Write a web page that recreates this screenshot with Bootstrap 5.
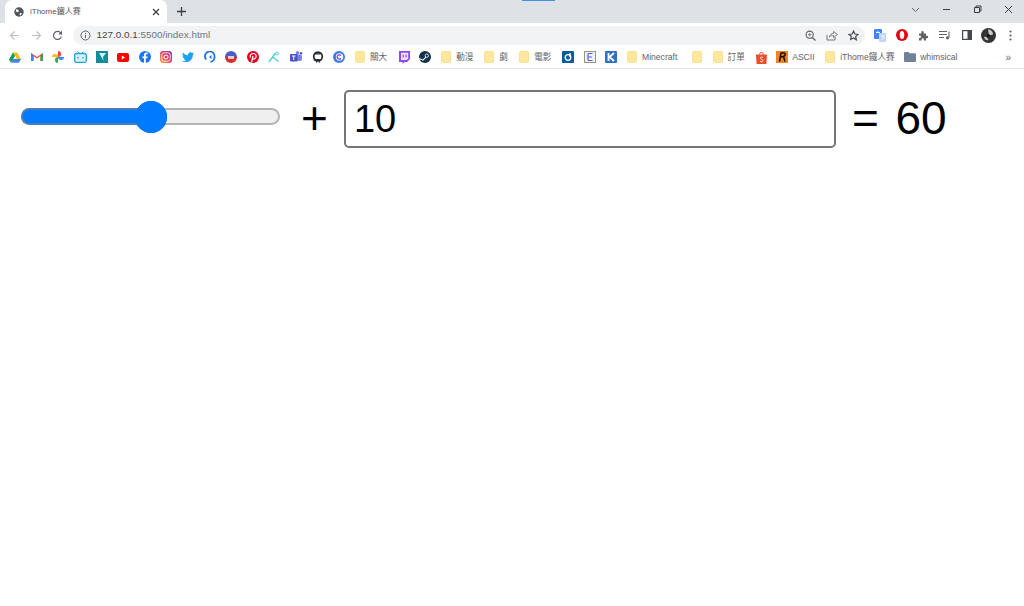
<!DOCTYPE html>
<html lang="en">
<head>
    <meta charset="UTF-8">
    <meta name="viewport" content="width=device-width, initial-scale=1.0">
    <title>iThome鐵人賽</title>
    <link href="https://cdn.jsdelivr.net/npm/bootstrap@5.3.3/dist/css/bootstrap.min.css" rel="stylesheet">
    <style>
        body { background: #fff; font-family: "Liberation Sans", "Noto Sans CJK TC", sans-serif; overflow: hidden; }
        /* browser frame */
        .tab-strip { height: 23px; background: #dee1e6; position: relative; }
        .load-line { position: absolute; left: 522px; top: 0; width: 33px; height: 1px; background: #3f92e4; }
        .page-tab { width: 162px; margin-left: 5px; height: 23px; background: #fff; border-radius: 7px 7px 0 0; padding: 0 7px 0 9px; font-size: 8px; color: #55585c; }
        .tab-title { margin-left: 6px; }
        .new-tab { margin-left: 9px; margin-bottom: 6px; }
        .win-btns { margin-left: auto; gap: 0; }
        .win-btn { width: 31px; height: 19px; }
        .tool-row { height: 23px; padding: 1px 0 0 4px; }
        .nav-ico { width: 21.5px; }
        .omni { width: 792px; height: 19px; margin-left: 4px; background: #f1f3f4; border-radius: 10px; padding: 0 6px 0 7px; font-size: 9.9px; color: #70757a; }
        .omni-url { margin-left: 6px; }
        .omni-dark { color: #45484c; }
        .omni-gap { margin-left: 10px; }
        .ext-row { margin-left: 1px; }
        .ext-ico { width: 21.7px; }
        .bookmarks { height: 23px; padding-left: 4.5px; border-bottom: 1px solid #e3e5e8; font-size: 8.6px; color: #5f6368; white-space: nowrap; }
        .bm { width: 21.6px; }
        .bm-label { margin-left: 4px; }
        .bm-w43 { width: 43px; }
        .bm-w35 { width: 35px; }
        .bm-w64 { width: 64px; }
        .bm-w48 { width: 48px; }
        .bm-w80 { width: 80px; }
        .bm-w62 { width: 62px; }
        .bm-more { margin-left: auto; margin-right: 13px; color: #5f6368; font-size: 10px; }
        /* exercise page */
        .calc-row { padding: 21px 0 0 21px; }
        .slider { -webkit-appearance: none; appearance: none; width: 259px; height: 17px; margin: 0; background: none; border-radius: 9px; }
        .slider::-webkit-slider-runnable-track { height: 17px; border-radius: 9px; border: 2px solid #b4b4b4; background: #efefef; }
        .slider::-webkit-slider-thumb { -webkit-appearance: none; appearance: none; width: 32px; height: 32px; margin-top: -9.5px; border-radius: 50%; background: #007bff; }
        .slider-box { position: relative; width: 259px; height: 17px; margin-bottom: 5px; }
        .slider-fill { position: absolute; left: 0; top: 0; height: 17px; background: #007bff; border: 2px solid #4a7db8; border-right: 0; border-radius: 9px 0 0 9px; pointer-events: none; }
        .slider-knob { position: absolute; left: 114px; top: -7.5px; width: 32px; height: 32px; border-radius: 50%; background: #007bff; pointer-events: none; }
        .calc-text { font-size: 46px; line-height: 58px; color: #000; }
        .plus-sign { margin-left: 21px; margin-top: -2px; }
        .num-field.form-control { width: 492px; height: 58px; margin-left: 16px; padding: 0 8px; font-family: inherit; font-size: 38px; color: #000; border: 2px solid #767676; border-radius: 5px; box-shadow: none; }
        .equal-sign { margin-left: 16px; margin-top: -2px; word-spacing: 4px; }
    </style>
</head>
<body>
<svg width="0" height="0" class="d-block position-absolute">
    <defs>
        <symbol id="folder-y" viewBox="0 0 12 14"><path d="M1.500 2.500a1 1 0 0 1 1-1h7a1 1 0 0 1 1 1v9a1 1 0 0 1-1 1h-7a1 1 0 0 1-1-1z" fill="#fee79f" stroke="#f8dc80" stroke-width=".8"/></symbol>
    </defs>
</svg>

<!-- Tabs -->
<div class="tab-strip d-flex align-items-end">
    <div class="load-line"></div>
    <div class="page-tab d-flex align-items-center">
        <svg width="10" height="10" viewBox="0 0 10 10"><circle cx="5" cy="5" r="4.7" fill="#50565c"/><path d="M2 2.200l2 .4 1 1.600-1.200 1-1.700-.6zM6 6l2 .2-1.400 2.400L5.500 8z" fill="#fff"/></svg>
        <span class="tab-title">iThome鐵人賽</span>
        <svg class="ms-auto" width="8" height="8" viewBox="0 0 8 8"><path d="M1 1l6 6M7 1L1 7" stroke="#3c4043" stroke-width="1.300"/></svg>
    </div>
    <svg class="new-tab" width="11" height="11" viewBox="0 0 11 11"><path d="M5.500 1v9M1 5.500h9" stroke="#3c4043" stroke-width="1.300"/></svg>
    <div class="win-btns d-flex align-items-center mb-1">
        <div class="win-btn d-flex align-items-center justify-content-center"><svg width="9" height="6" viewBox="0 0 9 6"><path d="M1 1l3.500 3.500L8 1" fill="none" stroke="#5f6368"/></svg></div>
        <div class="win-btn d-flex align-items-center justify-content-center"><svg width="9" height="9" viewBox="0 0 9 9"><path d="M1 4.500h7" stroke="#3c4043"/></svg></div>
        <div class="win-btn d-flex align-items-center justify-content-center"><svg width="9" height="9" viewBox="0 0 9 9"><path d="M1.500 2.500h5v5h-5zM3 2.500V1h5v5H6.500" fill="none" stroke="#3c4043"/></svg></div>
        <div class="win-btn d-flex align-items-center justify-content-center"><svg width="9" height="9" viewBox="0 0 9 9"><path d="M1 1l7 7M8 1L1 8" stroke="#3c4043"/></svg></div>
    </div>
</div>

<!-- Address bar -->
<div class="tool-row d-flex align-items-center">
    <div class="nav-ico d-flex justify-content-center"><svg width="11" height="11" viewBox="0 0 11 11"><path d="M10 5.500H1.500M5.500 1.500l-4 4 4 4" fill="none" stroke="#bdc1c6" stroke-width="1.200"/></svg></div>
    <div class="nav-ico d-flex justify-content-center"><svg width="11" height="11" viewBox="0 0 11 11"><path d="M1 5.500h8.500M5.500 1.500l4 4-4 4" fill="none" stroke="#bdc1c6" stroke-width="1.200"/></svg></div>
    <div class="nav-ico d-flex justify-content-center"><svg width="11" height="11" viewBox="0 0 11 11"><path d="M9.300 6.600A4 4 0 1 1 8.400 2.700L9.600 4" fill="none" stroke="#5f6368" stroke-width="1.200"/><path d="M10 .8v3.600H6.400z" fill="#5f6368"/></svg></div>
    <div class="omni d-flex align-items-center">
        <svg width="11" height="11" viewBox="0 0 11 11"><circle cx="5.500" cy="5.500" r="4.500" fill="none" stroke="#5f6368"/><path d="M5.500 5v3M5.500 3v1.200" stroke="#5f6368"/></svg>
        <span class="omni-url"><span class="omni-dark">127.0.0.1</span>:5500/index.html</span>
        <svg class="ms-auto" width="11" height="11" viewBox="0 0 11 11"><circle cx="4.700" cy="4.700" r="3.600" fill="none" stroke="#5f6368" stroke-width="1.100"/><path d="M7.400 7.400l3 3" stroke="#5f6368" stroke-width="1.400"/><path d="M3 4.700h3.400M4.700 3v3.400" stroke="#5f6368" stroke-width=".8"/></svg>
        <svg class="omni-gap" width="12" height="11" viewBox="0 0 12 11"><path d="M1 5v5h8V7" fill="none" stroke="#70757a"/><path d="M3.500 7c.3-2.500 2-3.500 4-3.500V1.500l4 3-4 3V5.500c-1.500 0-3 .3-4 1.500z" fill="none" stroke="#70757a" stroke-width=".9"/></svg>
        <svg class="omni-gap" width="11" height="11" viewBox="0 0 12 12"><path d="M6 1.200l1.500 3.200 3.500.4-2.600 2.400.7 3.500L6 8.600l-3.100 1.700.7-3.500L1 4.800l3.500-.4z" fill="none" stroke="#45484c" stroke-width="1.300"/></svg>
    </div>
    <div class="ext-row d-flex align-items-center">
        <div class="ext-ico d-flex justify-content-center ms-1"><svg width="12" height="13" viewBox="0 0 12 13"><rect x="0" y="0" width="8" height="10" rx="1" fill="#4285f4"/><rect x="5" y="4" width="7" height="9" rx="1" fill="#c3d4f2"/><path d="M2 3.500h4M4 2v1.500M7 7h3.500l-2 3.500" stroke="#fff" stroke-width=".9" fill="none"/></svg></div>
        <div class="ext-ico d-flex justify-content-center"><svg width="12" height="12" viewBox="0 0 12 12"><circle cx="6" cy="6" r="6" fill="#e60012"/><ellipse cx="6" cy="6" rx="2.300" ry="4" fill="#fff"/></svg></div>
        <div class="ext-ico d-flex justify-content-center"><svg width="11" height="11" viewBox="0 0 11 11"><path d="M1 3.500h2.300V2.300a1.200 1.200 0 0 1 2.400 0v1.200H8v2.300h1a1.200 1.200 0 0 1 0 2.400H8V10.500H5.800V9.300a1.100 1.100 0 0 0-2.200 0v1.200H1V8h.8a1.200 1.200 0 0 0 0-2.400H1z" fill="#5f6368"/></svg></div>
        <div class="ext-ico d-flex justify-content-center"><svg width="12" height="10" viewBox="0 0 12 10"><path d="M0 1.500h8M0 4.500h8M0 7.500h5" stroke="#5f6368" stroke-width="1.100"/><path d="M10 1.500v6" stroke="#5f6368" stroke-width="1.100"/><circle cx="8.500" cy="7.800" r="1.600" fill="#5f6368"/></svg></div>
        <div class="ext-ico d-flex justify-content-center"><svg width="10" height="10" viewBox="0 0 10 10"><rect x=".6" y=".6" width="8.800" height="8.800" fill="#fff" stroke="#45484c" stroke-width="1.200"/><rect x="5.500" y="1" width="4" height="8" fill="#45484c"/></svg></div>
        <div class="ext-ico d-flex justify-content-center"><svg width="15" height="15" viewBox="0 0 15 15"><circle cx="7.500" cy="7.500" r="7.500" fill="#333"/><path d="M7 1.500c3 0 5 2 5 5l-4 1zM3 9c2-.5 3 0 4.500 3-2 .8-4-.5-4.500-3z" fill="#c9c9c9"/><circle cx="7.500" cy="7.500" r="1.500" fill="#111"/></svg></div>
        <div class="ext-ico d-flex justify-content-center"><svg width="3" height="11" viewBox="0 0 3 11"><circle cx="1.500" cy="1.500" r="1.100" fill="#5f6368"/><circle cx="1.500" cy="5.500" r="1.100" fill="#5f6368"/><circle cx="1.500" cy="9.500" r="1.100" fill="#5f6368"/></svg></div>
    </div>
</div>

<!-- Bookmarks -->
<div class="bookmarks d-flex align-items-center">
    <div class="bm d-flex justify-content-center"><svg width="12" height="11" viewBox="0 0 12 11"><path d="M4 .5h4l4 6.500H8z" fill="#fbbc04"/><path d="M4 .5L0 7.500l2 3.200 4-7z" fill="#0f9d58"/><path d="M2 10.700h8l2-3.700H4z" fill="#4285f4"/></svg></div>
    <div class="bm d-flex justify-content-center"><svg width="12" height="10" viewBox="0 0 12 10"><path d="M0 1v8h2.500V4L6 6.500 9.500 4v5H12V1L6 5z" fill="#ea4335"/><path d="M0 1v8h2.500V4z" fill="#4285f4"/><path d="M9.500 4v5H12V1z" fill="#34a853"/></svg></div>
    <div class="bm d-flex justify-content-center"><svg width="12" height="12" viewBox="0 0 12 12"><path d="M6 6V0a3 3 0 0 1 0 6z" fill="#ea4335"/><path d="M6 6h6a3 3 0 0 1-6 0z" fill="#4285f4"/><path d="M6 6v6a3 3 0 0 1 0-6z" fill="#34a853"/><path d="M6 6H0a3 3 0 0 1 6 0z" fill="#fbbc04"/></svg></div>
    <div class="bm d-flex justify-content-center"><svg width="13" height="12" viewBox="0 0 13 12"><rect x=".7" y="2.500" width="11.600" height="8.800" rx="1.500" fill="#d7f1fb" stroke="#1fa5d8" stroke-width="1.300"/><path d="M3.500.5l2 2M9.500.5l-2 2" stroke="#1fa5d8"/><path d="M4 6v1.500M9 6v1.500" stroke="#1fa5d8" stroke-width="1.300"/></svg></div>
    <div class="bm d-flex justify-content-center"><svg width="12" height="12" viewBox="0 0 12 12"><rect width="12" height="12" fill="#0f8d99"/><path d="M3 2h7L7 6l.5 4L6 7z" fill="#d9f1f2"/></svg></div>
    <div class="bm d-flex justify-content-center"><svg width="12" height="9" viewBox="0 0 12 9"><rect width="12" height="9" rx="2" fill="#f00"/><path d="M4.800 2.500L8 4.500 4.800 6.500z" fill="#fff"/></svg></div>
    <div class="bm d-flex justify-content-center"><svg width="12" height="12" viewBox="0 0 12 12"><circle cx="6" cy="6" r="6" fill="#1877f2"/><path d="M6.800 12V7.200h1.500l.3-1.800H6.800V4.300c0-.6.3-1 1-1h.9V1.700C7 1.400 5 1.700 5 4v1.400H3.500v1.800H5V12z" fill="#fff"/></svg></div>
    <div class="bm d-flex justify-content-center"><svg width="12" height="12" viewBox="0 0 12 12"><defs><linearGradient id="ig" x1="0" y1="1" x2="1" y2="0"><stop offset="0" stop-color="#fdb04b"/><stop offset=".5" stop-color="#e4405f"/><stop offset="1" stop-color="#8a3ab9"/></linearGradient></defs><rect width="12" height="12" rx="3" fill="url(#ig)"/><rect x="1.800" y="1.800" width="8.400" height="8.400" rx="2.300" fill="none" stroke="#fff" stroke-width=".8"/><circle cx="6" cy="6" r="2" fill="none" stroke="#fff"/></svg></div>
    <div class="bm d-flex justify-content-center"><svg width="12" height="10" viewBox="0 0 12 10"><path d="M12 1.200l-1.300.4.900-1.200-1.400.6A2.500 2.500 0 0 0 6 3.200C4 3.200 2 2 .9.500.1 2 .6 3.500 1.800 4.300L.7 4c0 1.300.9 2.300 2 2.600h-1c.3 1 1.200 1.700 2.300 1.700C3 9.100 1.600 9.500 0 9.300 5 12 11 9 10.800 3c.5-.4.900-.9 1.200-1.800z" fill="#1da1f2"/></svg></div>
    <div class="bm d-flex justify-content-center"><svg width="12" height="12" viewBox="0 0 12 12"><path d="M2.200 8.500A4.800 4.800 0 1 1 10.500 6" fill="none" stroke="#1a73e8" stroke-width="1.800"/><path d="M10.500 6a4.500 4.500 0 0 1-4 4.800" fill="none" stroke="#1a73e8" stroke-width="1.800"/><path d="M7.500 4L5 6l2.500 2z" fill="#1a73e8"/></svg></div>
    <div class="bm d-flex justify-content-center"><svg width="12" height="12" viewBox="0 0 12 12"><path d="M0 6a6 6 0 0 1 12 0z" fill="#4a5fc4"/><path d="M0 6h12a6 6 0 0 1-12 0z" fill="#d92b2b"/><rect x="3" y="5" width="6" height="3" fill="#f7c9c9"/></svg></div>
    <div class="bm d-flex justify-content-center"><svg width="12" height="12" viewBox="0 0 12 12"><circle cx="6" cy="6" r="6" fill="#e60023"/><path d="M4.500 11.500L6 5M3.500 6.500C2.500 4 4.500 2.500 6.300 2.500 8.500 2.500 9.500 4.300 9 6c-.5 1.800-2.300 2.600-3.500 1.500" fill="none" stroke="#fff" stroke-width="1.200"/></svg></div>
    <div class="bm d-flex justify-content-center"><svg width="12" height="12" viewBox="0 0 12 12"><path d="M1 11l6.500-9M4 5.500l6.500 5" fill="none" stroke="#53d3cb" stroke-width="1.500"/><circle cx="9" cy="2.500" r="1.400" fill="none" stroke="#53d3cb"/></svg></div>
    <div class="bm d-flex justify-content-center"><svg width="13" height="12" viewBox="0 0 13 12"><rect x="5" y="3.500" width="7" height="6.500" rx="2" fill="#7b83eb"/><circle cx="7.500" cy="1.800" r="1.700" fill="#7b83eb"/><circle cx="11" cy="2.200" r="1.300" fill="#5059c9"/><rect x="0" y="3" width="7.500" height="7.500" rx="1" fill="#4b53bc"/><path d="M2 5h3.500M3.750 5v4" stroke="#fff"/></svg></div>
    <div class="bm d-flex justify-content-center"><svg width="12" height="12" viewBox="0 0 12 12"><circle cx="6" cy="5.500" r="4.300" fill="none" stroke="#24292f" stroke-width="1.700"/><path d="M3.600 1.200l1.400 1h2l1.400-1 .5 2.300H3.100zM4.200 8h3.600v3.800H6.900V9.500H5.100v2.300H4.200zM1 8.500c.9-.2 1.400.9 3 .9v.9c-1.900 0-2.300-1.300-3-1.800z" fill="#24292f"/></svg></div>
    <div class="bm d-flex justify-content-center"><svg width="12" height="12" viewBox="0 0 12 12"><circle cx="6" cy="6" r="6" fill="#3b7de0"/><circle cx="6.500" cy="6" r="3.700" fill="#f0f4ff"/><path d="M8 4.500a2.200 2.200 0 1 0 0 3" fill="none" stroke="#7a3fd0" stroke-width="1.200"/></svg></div>
    <div class="bm-w43 d-flex align-items-center ps-1"><svg width="12" height="14"><use href="#folder-y"/></svg><span class="bm-label">關大</span></div>
    <div class="bm d-flex justify-content-center"><svg width="12" height="13" viewBox="0 0 12 13"><path d="M1 0h11v8l-3 3H6.500L4.500 13v-2H1z" fill="#9146ff"/><path d="M3 1.800h7.200v5.500L8.500 9H3z" fill="#f1e9ff"/><path d="M5.200 3.500v3M8 3.500v3" stroke="#9146ff" stroke-width="1.200"/></svg></div>
    <div class="bm d-flex justify-content-center"><svg width="12" height="12" viewBox="0 0 12 12"><circle cx="6" cy="6" r="6" fill="#14304f"/><circle cx="7.800" cy="4.700" r="1.700" fill="none" stroke="#fff" stroke-width=".8"/><path d="M0 7.500l4 1.700 3-3" stroke="#fff" stroke-width="1.100" fill="none"/></svg></div>
    <div class="bm-w43 d-flex align-items-center ps-1"><svg width="12" height="14"><use href="#folder-y"/></svg><span class="bm-label">動漫</span></div>
    <div class="bm-w35 d-flex align-items-center ps-1"><svg width="12" height="14"><use href="#folder-y"/></svg><span class="bm-label">劇</span></div>
    <div class="bm-w43 d-flex align-items-center ps-1"><svg width="12" height="14"><use href="#folder-y"/></svg><span class="bm-label">電影</span></div>
    <div class="bm d-flex justify-content-center"><svg width="12" height="12" viewBox="0 0 12 12"><rect width="12" height="12" rx="1" fill="#0a5c96"/><circle cx="6" cy="6.500" r="2.800" fill="none" stroke="#fff" stroke-width="1.300"/><path d="M8 2v4" stroke="#fff" stroke-width="1.300"/></svg></div>
    <div class="bm d-flex justify-content-center"><svg width="12" height="12" viewBox="0 0 12 12"><rect x=".5" y=".5" width="11" height="11" fill="#eef0fa" stroke="#8f9a7d"/><path d="M4 2.500h4.500M4 6h4M4 9.500h4.500M4 2.500v7" stroke="#5a61c8" stroke-width="1.200" fill="none"/></svg></div>
    <div class="bm d-flex justify-content-center"><svg width="12" height="12" viewBox="0 0 12 12"><rect width="12" height="12" rx="1" fill="#2f72c4"/><path d="M3.500 2v8M9 2L4.500 6 9 10" fill="none" stroke="#fff" stroke-width="1.800"/></svg></div>
    <div class="bm-w64 d-flex align-items-center ps-1"><svg width="12" height="14"><use href="#folder-y"/></svg><span class="bm-label">Minecraft</span></div>
    <div class="bm d-flex justify-content-center"><svg width="12" height="14"><use href="#folder-y"/></svg></div>
    <div class="bm-w43 d-flex align-items-center ps-1"><svg width="12" height="14"><use href="#folder-y"/></svg><span class="bm-label">訂單</span></div>
    <div class="bm d-flex justify-content-center"><svg width="11" height="13" viewBox="0 0 11 13"><path d="M0 3.500h11l-.6 9.500H.6z" fill="#ee4d2d"/><path d="M3.500 3.500a2 2 0 0 1 4 0" fill="none" stroke="#ee4d2d"/><path d="M7 6.500C6 5.800 4.300 6 4.300 7.200S7 8.300 7 9.700 5 11 4 10.300" fill="none" stroke="#fff" stroke-width=".8"/></svg></div>
    <div class="bm-w48 d-flex align-items-center ps-1"><svg width="12" height="12" viewBox="0 0 12 12"><rect width="12" height="12" fill="#f58220"/><path d="M3.500 10.500L5 2h3c1.800 0 1.500 3-.5 3.300L9 10.500M4.500 5.800h2.500" fill="none" stroke="#111" stroke-width="1.500"/></svg><span class="bm-label">ASCII</span></div>
    <div class="bm-w80 d-flex align-items-center ps-1"><svg width="12" height="14"><use href="#folder-y"/></svg><span class="bm-label">iThome鐵人賽</span></div>
    <div class="bm-w62 d-flex align-items-center ps-1"><svg width="12" height="10" viewBox="0 0 12 10"><path d="M0 1a1 1 0 0 1 1-1h3.500l1 1.300H11a1 1 0 0 1 1 1V9a1 1 0 0 1-1 1H1a1 1 0 0 1-1-1z" fill="#6f8296"/></svg><span class="bm-label">whimsical</span></div>
    <span class="bm-more">»</span>
</div>

<!-- Page content -->
<div class="calc-row d-flex align-items-center">
    <div class="slider-box">
        <input class="slider d-block" type="range" min="0" max="100" value="50">
        <div class="slider-fill" style="width: 50%"></div>
        <div class="slider-knob"></div>
    </div>
    <span class="calc-text plus-sign">+</span>
    <input class="num-field form-control" type="number" value="10">
    <span class="calc-text equal-sign">= 60</span>
</div>

<script src="https://cdn.jsdelivr.net/npm/bootstrap@5.3.3/dist/js/bootstrap.bundle.min.js"></script>
</body>
</html>
